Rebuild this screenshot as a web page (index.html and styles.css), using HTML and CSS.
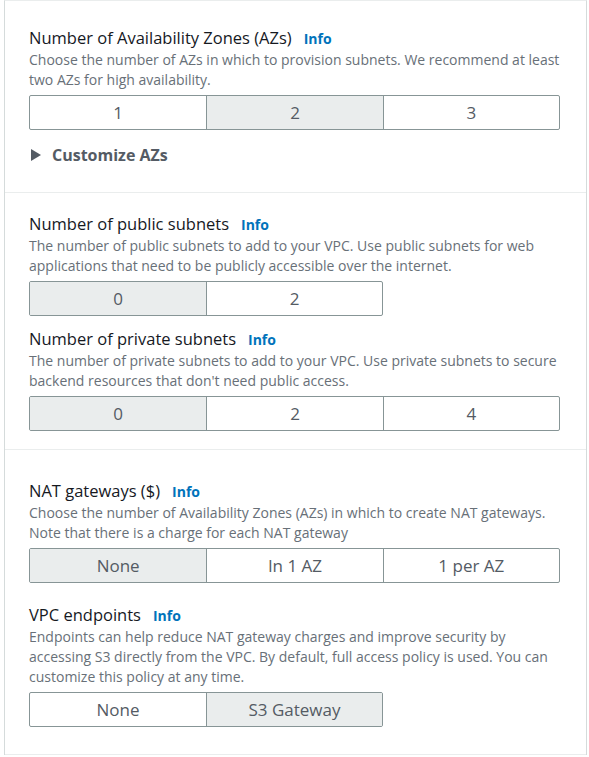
FILE: index.html
```html
<!DOCTYPE html>
<html>
<head>
<meta charset="utf-8">
<link rel="stylesheet" href="styles.css">
</head>
<body>
<div class="panel">
  <section class="section s1">
    <div class="field">
      <div class="label-row"><span class="title">Number of Availability Zones (AZs)</span><a class="info">Info</a></div>
      <p class="desc">Choose the number of AZs in which to provision subnets. We recommend at least two AZs for high availability.</p>
      <div class="seg seg3">
        <div class="opt">1</div>
        <div class="opt sel">2</div>
        <div class="opt">3</div>
      </div>
    </div>
    <div class="expand"><span class="caret"></span><span>Customize AZs</span></div>
  </section>
  <section class="section s2">
    <div class="field">
      <div class="label-row"><span class="title">Number of public subnets</span><a class="info">Info</a></div>
      <p class="desc">The number of public subnets to add to your VPC. Use public subnets for web applications that need to be publicly accessible over the internet.</p>
      <div class="seg seg2">
        <div class="opt sel">0</div>
        <div class="opt">2</div>
      </div>
    </div>
    <div class="field">
      <div class="label-row"><span class="title">Number of private subnets</span><a class="info">Info</a></div>
      <p class="desc">The number of private subnets to add to your VPC. Use private subnets to secure backend resources that don't need public access.</p>
      <div class="seg seg3">
        <div class="opt sel">0</div>
        <div class="opt">2</div>
        <div class="opt">4</div>
      </div>
    </div>
  </section>
  <section class="section s3">
    <div class="field">
      <div class="label-row"><span class="title">NAT gateways ($)</span><a class="info">Info</a></div>
      <p class="desc">Choose the number of Availability Zones (AZs) in which to create NAT gateways. Note that there is a charge for each NAT gateway</p>
      <div class="seg seg3">
        <div class="opt sel">None</div>
        <div class="opt">In 1 AZ</div>
        <div class="opt">1 per AZ</div>
      </div>
    </div>
    <div class="field">
      <div class="label-row"><span class="title">VPC endpoints</span><a class="info">Info</a></div>
      <p class="desc">Endpoints can help reduce NAT gateway charges and improve security by accessing S3 directly from the VPC. By default, full access policy is used. You can customize this policy at any time.</p>
      <div class="seg seg2">
        <div class="opt">None</div>
        <div class="opt sel">S3 Gateway</div>
      </div>
    </div>
  </section>
</div>
</body>
</html>
```

FILE: styles.css
```css
html, body {
  margin: 0;
  padding: 0;
  background: #ffffff;
}
body {
  font-family: "Open Sans", "Noto Sans", sans-serif;
  color: #16191f;
}
.panel {
  margin-left: 4px;
  width: 581px;
  border-left: 1px solid #d5dbdb;
  border-right: 1px solid #d5dbdb;
  border-top: 1px solid #eaeded;
}
.section {
  padding-left: 24px;
  padding-right: 26px;
  border-bottom: 1px solid #eaeded;
}
.s1 { padding-top: 25px; padding-bottom: 26px; }
.s2 { padding-top: 19px; padding-bottom: 18px; }
.s3 { padding-top: 29px; padding-bottom: 27px; }
.field + .field { margin-top: 11px; }
.s3 .field + .field { margin-top: 20px; }
.label-row {
  display: flex;
  align-items: baseline;
  height: 24px;
  line-height: 24px;
}
.title {
  font-size: 16.5px;
  color: #16191f;
}
.info {
  margin-left: 12px;
  font-size: 14px;
  font-weight: 700;
  color: #0073bb;
}
.desc {
  margin: 0;
  font-size: 14px;
  line-height: 20px;
  color: #687078;
}
.seg {
  margin-top: 5px;
  display: grid;
  height: 33px;
  border: 1px solid #879596;
  border-radius: 2px;
  overflow: hidden;
}
.seg3 { grid-template-columns: 1fr 1fr 1fr; width: 529px; }
.seg2 { grid-template-columns: 1fr 1fr; width: 352px; }
.opt {
  display: flex;
  align-items: center;
  justify-content: center;
  font-size: 17px;
  color: #545b64;
}
.opt + .opt { border-left: 1px solid #879596; }
.opt.sel { background: #eaeded; }
.expand {
  margin-top: 14px;
  display: flex;
  align-items: center;
  height: 22px;
  font-size: 16px;
  font-weight: 700;
  color: #545b64;
}
.caret {
  width: 0;
  height: 0;
  margin-left: 2px;
  margin-right: 11px;
  border-top: 6px solid transparent;
  border-bottom: 6px solid transparent;
  border-left: 10px solid #545b64;
}
```
